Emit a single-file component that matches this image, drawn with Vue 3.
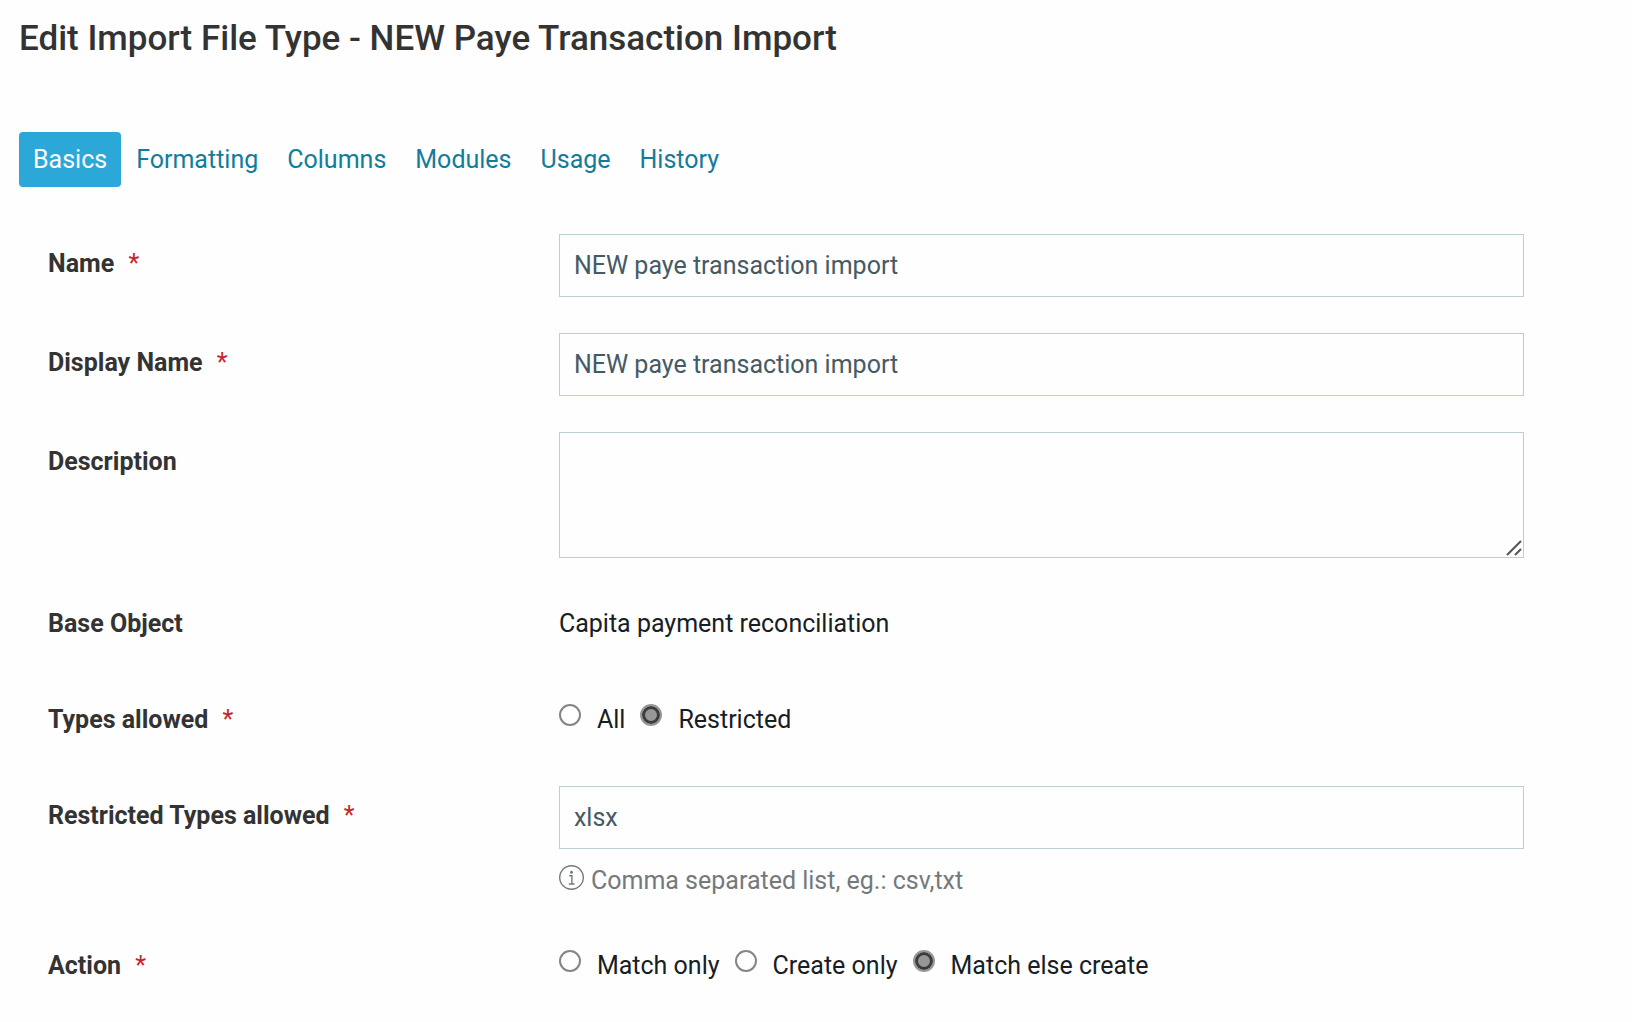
<script setup>
import { reactive } from 'vue'

const tabs = ['Basics', 'Formatting', 'Columns', 'Modules', 'Usage', 'History']
const form = reactive({
  name: 'NEW paye transaction import',
  displayName: 'NEW paye transaction import',
  description: '',
  types: 'Restricted',
  restrictedTypes: 'xlsx',
  action: 'Match else create',
})
const typeOptions = ['All', 'Restricted']
const actionOptions = ['Match only', 'Create only', 'Match else create']
</script>

<template>
  <main class="page">
    <h1 class="title">Edit Import File Type - NEW Paye Transaction Import</h1>

    <nav class="tabs">
      <a
        v-for="(tab, i) in tabs"
        :key="tab"
        href="#"
        class="tab"
        :class="{ active: i === 0 }"
      >{{ tab }}</a>
    </nav>

    <form class="form" @submit.prevent>
      <div class="row">
        <label class="label" for="name">Name <span class="required">*</span></label>
        <input id="name" v-model="form.name" class="control" type="text">
      </div>

      <div class="row">
        <label class="label" for="display-name">Display Name <span class="required">*</span></label>
        <input id="display-name" v-model="form.displayName" class="control" type="text">
      </div>

      <div class="row">
        <label class="label" for="description">Description</label>
        <div class="area">
          <textarea id="description" v-model="form.description" class="control"></textarea>
          <svg class="grip" viewBox="0 0 16 16" aria-hidden="true">
            <path d="M1 15L15 1M9 15L15 9" />
          </svg>
        </div>
      </div>

      <div class="row">
        <span class="label">Base Object</span>
        <span class="value">Capita payment reconciliation</span>
      </div>

      <div class="row" role="radiogroup" aria-labelledby="types-label">
        <span id="types-label" class="label">Types allowed <span class="required">*</span></span>
        <div class="options">
          <label v-for="o in typeOptions" :key="o" class="option">
            <input v-model="form.types" class="radio" type="radio" name="types" :value="o">{{ o }}
          </label>
        </div>
      </div>

      <div class="row">
        <label class="label" for="restricted">Restricted Types allowed <span class="required">*</span></label>
        <div>
          <input id="restricted" v-model="form.restrictedTypes" class="control" type="text" aria-describedby="restricted-help">
          <p id="restricted-help" class="help">
            <svg class="info" viewBox="0 0 25 25" aria-hidden="true">
              <circle class="ring" cx="12.5" cy="12.5" r="11.8" />
              <circle class="dot" cx="12.5" cy="7.2" r="1.5" />
              <path class="stem" d="M10.2 10.8H12.9V18.8M9.8 19H15.6" />
            </svg>
            Comma separated list, eg.: csv,txt
          </p>
        </div>
      </div>

      <div class="row" role="radiogroup" aria-labelledby="action-label">
        <span id="action-label" class="label">Action <span class="required">*</span></span>
        <div class="options">
          <label v-for="o in actionOptions" :key="o" class="option">
            <input v-model="form.action" class="radio" type="radio" name="action" :value="o">{{ o }}
          </label>
        </div>
      </div>
    </form>
  </main>
</template>

<style>
body {
  margin: 0;
  background: #fefefe;
}
</style>

<style scoped>
.page {
  padding: 17px 19px 36px;
  font-family: Roboto, "Liberation Sans", sans-serif;
  font-size: 25px;
  line-height: 36px;
  color: #162024;
}

.title {
  margin: 0 0 71px;
  font-size: 35px;
  line-height: 44px;
  font-weight: 500;
  color: #333;
}

.tabs {
  display: flex;
  gap: 1px;
}

.tab {
  padding: 10px 14px 9px;
  border-radius: 4px;
  color: #127c9c;
  text-decoration: none;
}

.tab.active {
  background: #2ba8d8;
  color: #fff;
}

.form {
  display: flex;
  flex-direction: column;
  gap: 36px;
  padding: 47px 89px 0 29px;
}

.row {
  display: grid;
  grid-template-columns: 9fr 17fr;
  align-items: start;
}

.label {
  padding: 12px 0;
  font-weight: 700;
  color: #333;
}

.required {
  margin-left: 8px;
  font-weight: 400;
  color: #c9252d;
}

.value {
  padding: 12px 0;
}

.control {
  display: block;
  box-sizing: border-box;
  width: 100%;
  height: 63px;
  margin: 0;
  padding: 0 14px;
  border: 1px solid #bfcdd4;
  border-radius: 0;
  outline: 0;
  background: #fefefe;
  color: #455a64;
  font: inherit;
}

.area {
  position: relative;
}

textarea.control {
  height: 126px;
  padding: 12px 14px;
  resize: none;
}

.grip {
  position: absolute;
  right: 2px;
  bottom: 2px;
  width: 16px;
  height: 16px;
  fill: none;
  stroke: #555;
  stroke-width: 2;
  pointer-events: none;
}

.options {
  display: flex;
  gap: 15px;
  padding: 12px 0;
}

.option {
  display: flex;
  gap: 16px;
}

.radio {
  appearance: none;
  box-sizing: border-box;
  width: 22px;
  height: 22px;
  margin: 2px 0 0;
  border: 2px solid #858585;
  border-radius: 50%;
  background: #fff;
}

.radio:checked {
  border-color: #979797;
  background: #979797;
  box-shadow: inset 0 0 0 3px #3c3c3c;
}

.help {
  display: flex;
  gap: 7px;
  margin: 14px 0 1px;
  color: #74797c;
}

.info {
  width: 25px;
  height: 25px;
  margin-top: 2px;
}

.ring,
.stem {
  fill: none;
  stroke: #74797c;
  stroke-width: 1.4;
}

.dot {
  fill: #74797c;
}
</style>
